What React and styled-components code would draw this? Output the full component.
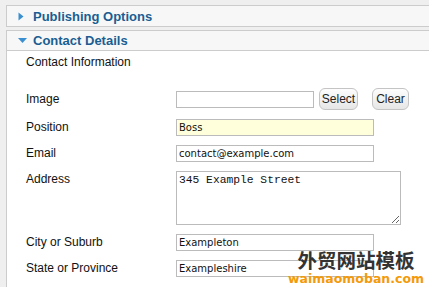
import React from 'react'
import styled, { createGlobalStyle } from 'styled-components'

const Global = createGlobalStyle`
  html, body { margin: 0; padding: 0; }
  body {
    background: #efefef;
    font-family: "Liberation Sans", Arial, sans-serif;
    width: 429px;
    height: 287px;
    overflow: hidden;
  }
`

const Page = styled.div`
  position: relative;
  height: 287px;
  padding: 5px 0 0 6px;
  box-sizing: border-box;
  overflow: hidden;
`

const Panel = styled.div`
  border: 1px solid #cccccc;
  border-right: none;
  margin-bottom: ${({ gap }) => gap || 0}px;
  background: #ffffff;
`

const Header = styled.div`
  display: flex;
  align-items: center;
  height: ${({ h }) => h}px;
  padding-left: 11px;
  background: #f7f7f7;
  border-bottom: ${({ open }) => (open ? '1px solid #cccccc' : 'none')};
  font-size: 13px;
  font-weight: bold;
  color: #1a5e92;
`

const Arrow = styled.svg`
  width: 9px;
  height: 9px;
  margin-right: 6px;
  flex: none;
`

const Body = styled.div`
  padding: 4px 0 0 19px;
  height: 260px;
  font-size: 12px;
  color: #111;
`

const Info = styled.div`
  line-height: 15px;
  margin-bottom: 18px;
`

const Form = styled.div`
  display: flex;
  flex-direction: column;
  gap: 9px;
`

const Row = styled.div`
  display: flex;
  align-items: ${({ top }) => (top ? 'flex-start' : 'center')};
  height: ${({ h }) => h || 17}px;
`

const Label = styled.label`
  width: 150px;
  flex: none;
  line-height: 17px;
  font-size: 12px;
`

const Input = styled.input`
  box-sizing: border-box;
  width: ${({ w }) => w}px;
  height: 17px;
  margin: 0;
  padding: 0 2px;
  border: 1px solid #bbbbbb;
  background: ${({ hl }) => (hl ? '#ffffdc' : '#ffffff')};
  font-family: "DejaVu Sans", Verdana, sans-serif;
  font-size: 10px;
  color: #111;
  outline: none;
`

const Area = styled.textarea`
  box-sizing: border-box;
  width: 225px;
  height: 54px;
  margin: 0;
  padding: 2px 2px;
  border: 1px solid #bbbbbb;
  font-family: "Liberation Mono", "Courier New", monospace;
  font-size: 11.3px;
  line-height: 13px;
  color: #111;
  outline: none;
`

const Button = styled.button`
  box-sizing: border-box;
  height: 22px;
  width: ${({ w }) => w}px;
  margin-left: ${({ ml }) => ml}px;
  padding: 0;
  border: 1px solid #c4c4c4;
  border-radius: 6px;
  background: linear-gradient(#fdfdfd, #e6e6e6);
  font-family: "Liberation Sans", Arial, sans-serif;
  font-size: 12px;
  color: #222;
`

const Mark = styled.div`
  position: absolute;
  right: 5px;
  bottom: 1px;
  display: flex;
  flex-direction: column;
  align-items: center;
`

const MarkCn = styled.div`
  font-family: "Noto Sans CJK SC", sans-serif;
  font-weight: bold;
  font-size: 19.5px;
  line-height: 25px;
  color: #333333;
`

const MarkEn = styled.div`
  font-family: "DejaVu Sans", sans-serif;
  font-weight: bold;
  font-size: 12.5px;
  line-height: 14px;
  color: #f39a0c;
`

const Right = () => (
  <Arrow viewBox="0 0 9 9">
    <polygon points="0.5,0.5 5.5,4.5 0.5,8.5" fill="#3a8fd0" />
  </Arrow>
)

const Down = () => (
  <Arrow viewBox="0 0 9 9">
    <polygon points="0,2 9,2 4.5,7" fill="#3a8fd0" />
  </Arrow>
)

export default function App() {
  return (
    <Page>
      <Global />
      <Panel gap={3}>
        <Header h={20}>
          <Right />
          Publishing Options
        </Header>
      </Panel>
      <Panel>
        <Header h={19} open>
          <Down />
          Contact Details
        </Header>
        <Body>
          <Info>Contact Information</Info>
          <Form>
            <Row h={22}>
              <Label>Image</Label>
              <Input w={138} defaultValue="" />
              <Button w={39} ml={5}>Select</Button>
              <Button w={37} ml={14}>Clear</Button>
            </Row>
            <Row>
              <Label>Position</Label>
              <Input w={198} hl defaultValue="Boss" />
            </Row>
            <Row>
              <Label>Email</Label>
              <Input w={198} defaultValue="contact@example.com" />
            </Row>
            <Row top h={54}>
              <Label>Address</Label>
              <Area defaultValue="345 Example Street" />
            </Row>
            <Row>
              <Label>City or Suburb</Label>
              <Input w={198} defaultValue="Exampleton" />
            </Row>
            <Row>
              <Label>State or Province</Label>
              <Input w={198} defaultValue="Exampleshire" />
            </Row>
          </Form>
        </Body>
      </Panel>
      <Mark>
        <MarkCn>外贸网站模板</MarkCn>
        <MarkEn>waimaomoban.com</MarkEn>
      </Mark>
    </Page>
  )
}
